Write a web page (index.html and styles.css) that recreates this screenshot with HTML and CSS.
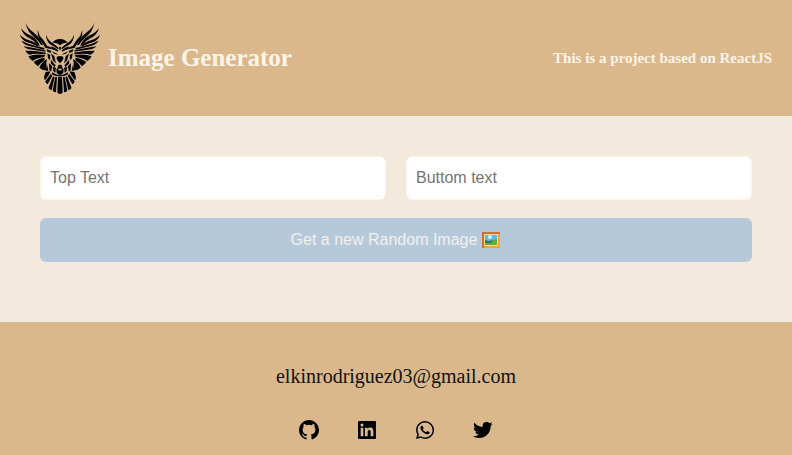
FILE: index.html
```html
<!DOCTYPE html>
<html lang="en">
<head>
<meta charset="utf-8">
<meta name="viewport" content="width=device-width, initial-scale=1">
<title>Image Generator</title>
<link rel="stylesheet" href="styles.css">
</head>
<body>
<header class="header">
  <div class="brand">
    <svg class="logo" viewBox="30 30 240 228" aria-hidden="true">
      <defs>
        <g id="half">
          <!-- wing feathers -->
          <path d="M47 38Q54 56 68 65Q84 76 92 92L100 106L93 105Q84 90 72 81Q52 66 47 38Z"/>
          <path d="M33 54Q44 70 60 76Q80 84 90 108L82 105Q72 90 56 83Q38 74 33 54Z"/>
          <path d="M83 59L89 77Q100 88 110 106L105 110Q96 96 87 86Q82 74 83 59Z"/>
          <path d="M30 74Q44 88 64 93Q78 97 88 110L78 107Q64 99 48 95Q34 88 30 74Z"/>
          <path d="M34 92Q54 102 78 108L104 114L102 119L70 111Q42 106 34 92Z"/>
          <path d="M41 109L72 114L106 121L107 125L72 120Q48 119 41 109Z"/>
          <path d="M46 122Q74 121 108 128L106 133Q78 129 58 134Q50 130 46 122Z"/>
          <path d="M55 139Q76 131 106 135L102 142Q84 142 68 153Q60 148 55 139Z"/>
          <path d="M71 156Q84 145 104 143L104 150Q92 158 84 169Q76 163 71 156Z"/>
          <path d="M88 173Q94 157 111 147L109 158L109 181Q96 181 88 173Z"/>
          <path d="M98 90L110 107L127 113L125 118L105 113Z"/>
          <path d="M110 117L124 123L122 129L112 125ZM112 130L121 135L120 150L114 145Z"/>
          <!-- horn and face -->
          <path d="M108 74Q114 92 133 103L146 114L144 118Q131 108 119 102Q109 92 108 74Z"/>
          <path d="M127 99Q134 87 151 87V106Q140 96 127 99Z"/>
          <path d="M124 109Q133 112 145 121L144 125Q132 119 125 118ZM126 124L141 131L144 134L132 131ZM123 130L133 139L138 160L129 152ZM122 148L131 160L137 166L134 171L123 162Z"/>
          <path d="M151 110L147 112L148 118L151 121ZM151 139H143L139 144L144 154L151 160Z"/>
          <!-- body and legs -->
          <path d="M117 159L126 169L124 184L118 181ZM128 170L138 173L136 188L130 184ZM151 164L145 165L143 170H151ZM151 170L144 171L139 179L140 188L144 192H151ZM111 163L115 182L107 182ZM127 187L141 194L151 193V197L139 199L125 193Z"/>
          <!-- tail -->
          <path d="M107 186L122 184L118 192L105 211Q99 205 107 186ZM122 192L127 197L113 223Q106 220 106 214ZM129 199L134 201L125 240Q117 240 116 232ZM136 201L141 202L138 246Q130 248 128 241ZM144 200H151V251Q141 252 142 246Z"/>
        </g>
      </defs>
      <use href="#half"/>
      <use href="#half" transform="translate(300 0) scale(-1 1)"/>
      <path class="cut" d="M145 176h10v5h-10z"/>
    </svg>
    <h1 class="title">Image Generator</h1>
  </div>
  <p class="tagline">This is a project based on ReactJS</p>
</header>
<main class="main">
  <form class="form">
    <input class="field" type="text" placeholder="Top Text" aria-label="Top Text">
    <input class="field" type="text" placeholder="Buttom text" aria-label="Buttom text">
    <button class="submit" type="button">
      <span>Get a new Random Image</span>
      <svg class="frame" viewBox="0 0 20 18" aria-hidden="true">
        <path fill="#f2a62c" d="M1 1h18v16H1z"/>
        <path fill="#d46e32" d="M1 1h18v2H3v14H1z"/>
        <path fill="#f9dc91" d="M3 3h14v12H3z"/>
        <path fill="#5db8ea" d="M4 4h12v7H4z"/>
        <path fill="#69a93c" d="M4 9l4 1 8-2v6H4z"/>
        <path fill="#267b67" d="M4 9q4 2 8 0l-2 3H4z"/>
        <circle fill="#d9f1f9" cx="9" cy="6" r="2"/>
      </svg>
    </button>
  </form>
</main>
<footer class="footer">
  <p class="email">elkinrodriguez03@gmail.com</p>
  <nav class="social" aria-label="Social links">
    <a href="#" aria-label="GitHub"><svg viewBox="0 0 24 24"><path d="M12.026 2c-5.509 0-9.974 4.465-9.974 9.974 0 4.406 2.857 8.145 6.821 9.465.499.09.679-.217.679-.481 0-.237-.008-.865-.011-1.696-2.775.602-3.361-1.338-3.361-1.338-.452-1.152-1.107-1.459-1.107-1.459-.905-.619.069-.605.069-.605 1.002.07 1.527 1.028 1.527 1.028.89 1.524 2.336 1.084 2.902.829.091-.645.351-1.085.635-1.334-2.214-.251-4.542-1.107-4.542-4.93 0-1.087.389-1.979 1.024-2.675-.101-.253-.446-1.268.099-2.64 0 0 .837-.269 2.742 1.021a9.582 9.582 0 0 1 2.496-.336 9.554 9.554 0 0 1 2.496.336c1.906-1.291 2.742-1.021 2.742-1.021.545 1.372.203 2.387.099 2.64.64.696 1.024 1.587 1.024 2.675 0 3.833-2.33 4.675-4.552 4.922.355.308.675.916.675 1.846 0 1.334-.012 2.41-.012 2.737 0 .267.178.577.687.479C19.146 20.115 22 16.379 22 11.974 22 6.465 17.535 2 12.026 2z"/></svg></a>
    <a href="#" aria-label="LinkedIn"><svg viewBox="0 0 24 24"><path d="M20 3H4a1 1 0 0 0-1 1v16a1 1 0 0 0 1 1h16a1 1 0 0 0 1-1V4a1 1 0 0 0-1-1zM8.339 18.337H5.667v-8.59h2.672v8.59zM7.003 8.574a1.548 1.548 0 1 1 0-3.096 1.548 1.548 0 0 1 0 3.096zm11.335 9.763h-2.669V14.16c0-.996-.018-2.277-1.388-2.277-1.39 0-1.601 1.086-1.601 2.207v4.248h-2.667v-8.59h2.56v1.174h.037c.355-.675 1.227-1.387 2.524-1.387 2.704 0 3.203 1.778 3.203 4.092v4.71z"/></svg></a>
    <a href="#" aria-label="WhatsApp"><svg viewBox="0 0 24 24"><path fill-rule="evenodd" d="M18.403 5.633A8.919 8.919 0 0 0 12.053 3c-4.948 0-8.976 4.027-8.978 8.977 0 1.582.413 3.126 1.198 4.488L3 21.116l4.759-1.249a8.981 8.981 0 0 0 4.29 1.093h.004c4.947 0 8.975-4.027 8.977-8.977a8.926 8.926 0 0 0-2.627-6.35m-6.35 13.812h-.003a7.446 7.446 0 0 1-3.798-1.041l-.272-.162-2.824.741.753-2.753-.177-.282a7.448 7.448 0 0 1-1.141-3.971c.002-4.114 3.349-7.461 7.465-7.461a7.413 7.413 0 0 1 5.275 2.188 7.42 7.42 0 0 1 2.183 5.279c-.002 4.114-3.349 7.462-7.461 7.462m4.093-5.589c-.225-.113-1.327-.655-1.533-.73-.205-.075-.354-.112-.504.112s-.58.729-.711.879-.262.168-.486.056-.947-.349-1.804-1.113c-.667-.595-1.117-1.329-1.248-1.554s-.014-.346.099-.458c.101-.1.224-.262.336-.393.112-.131.149-.224.224-.374s.038-.281-.019-.393c-.056-.113-.505-1.217-.692-1.666-.181-.435-.366-.377-.504-.383a9.65 9.65 0 0 0-.429-.008.826.826 0 0 0-.599.28c-.206.225-.785.767-.785 1.871s.804 2.171.916 2.321c.112.15 1.582 2.415 3.832 3.387.536.231.954.369 1.279.473.537.171 1.026.146 1.413.089.431-.064 1.327-.542 1.514-1.066.187-.524.187-.973.131-1.067-.056-.094-.207-.151-.43-.263"/></svg></a>
    <a href="#" aria-label="Twitter"><svg viewBox="0 0 24 24"><path d="M19.633 7.997c.013.175.013.349.013.523 0 5.325-4.053 11.461-11.46 11.461-2.282 0-4.402-.661-6.186-1.809.324.037.636.05.973.05a8.07 8.07 0 0 0 5.001-1.721 4.036 4.036 0 0 1-3.767-2.793c.249.037.499.062.761.062.361 0 .724-.05 1.061-.137a4.027 4.027 0 0 1-3.23-3.953v-.05c.537.299 1.16.486 1.82.511a4.022 4.022 0 0 1-1.796-3.354c0-.748.199-1.434.548-2.032a11.457 11.457 0 0 0 8.306 4.215c-.062-.3-.1-.611-.1-.923a4.026 4.026 0 0 1 4.028-4.028c1.16 0 2.197.486 2.93 1.271a7.98 7.98 0 0 0 2.556-.973 4.02 4.02 0 0 1-1.771 2.22 8.073 8.073 0 0 0 2.319-.624 8.645 8.645 0 0 1-2.006 2.083z"/></svg></a>
  </nav>
</footer>
</body>
</html>
```

FILE: styles.css
```css
* {
  box-sizing: border-box;
  margin: 0;
}

body {
  min-height: 100vh;
  display: flex;
  flex-direction: column;
  background: #f3e9dc;
  font-family: "Liberation Serif", "Times New Roman", serif;
}

.header {
  display: flex;
  align-items: center;
  justify-content: space-between;
  padding: 20px;
  background: #dab88b;
  color: #fdf3e7;
}

.brand {
  display: flex;
  align-items: center;
  gap: 8px;
}

.logo {
  display: block;
  width: 80px;
  height: 76px;
}

.cut {
  fill: #dab88b;
}

.title {
  font-size: 25px;
  line-height: 28px;
}

.tagline {
  font-size: 15px;
  line-height: 16px;
  font-weight: bold;
}

.main {
  padding: 40px 40px 60px;
}

.form {
  display: grid;
  grid-template-columns: 1fr 1fr;
  gap: 18px 20px;
}

.field,
.submit {
  min-width: 0;
  height: 44px;
  padding: 0 9px;
  border-radius: 6px;
  font: 16px "Liberation Sans", Arial, sans-serif;
}

.field {
  border: 1px solid #fdf3e7;
  background: #fff;
  color: #333;
}

.field::placeholder {
  color: #757575;
}

.submit {
  grid-column: 1 / -1;
  display: flex;
  align-items: center;
  justify-content: center;
  gap: 4px;
  border: 0;
  background: #b6c9db;
  color: #f3f0ec;
}

.frame {
  width: 20px;
  height: 18px;
}

.footer {
  flex: 1;
  display: flex;
  flex-direction: column;
  align-items: center;
  gap: 30px;
  padding: 42px 20px 12px;
  background: #dab88b;
  color: #111;
}

.email {
  font-size: 20px;
  line-height: 24px;
}

.social {
  display: flex;
  gap: 34px;
}

.social a {
  color: #000;
}

.social svg {
  display: block;
  width: 24px;
  height: 24px;
  fill: currentColor;
}
```
